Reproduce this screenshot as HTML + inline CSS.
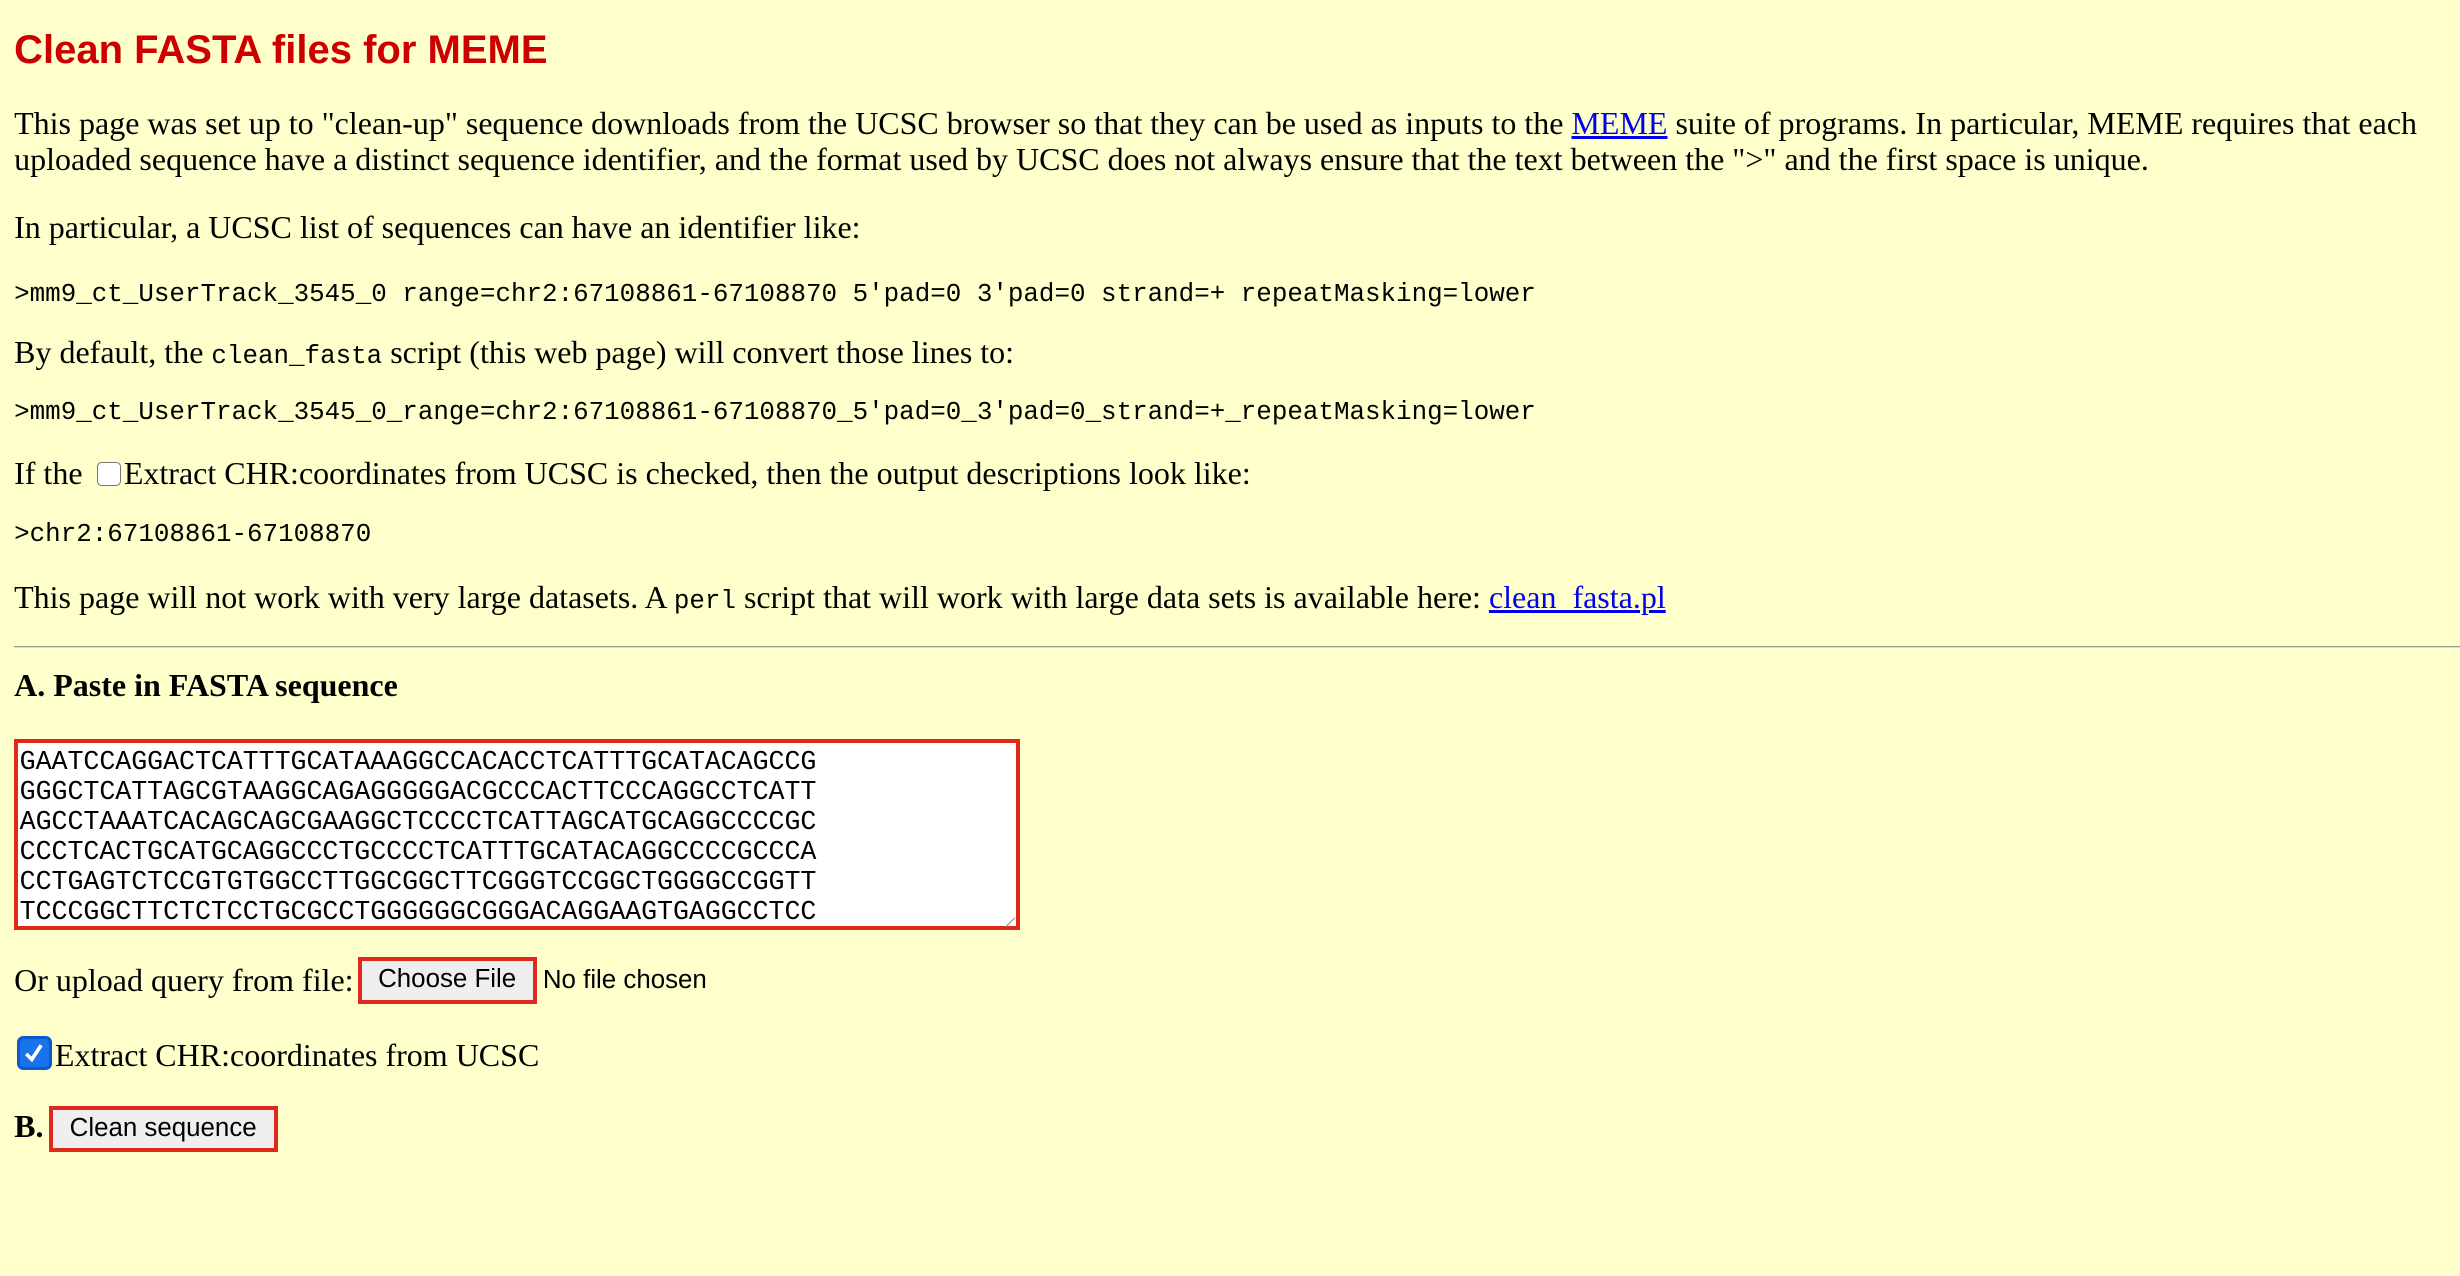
<!DOCTYPE html>
<html><head><meta charset="utf-8"><style>
html,body{margin:0;padding:0;background:#ffffcc;}
body{width:2460px;height:1276px;overflow:hidden;}
#w{zoom:1.569;position:relative;width:1568px;height:813px;font-family:"Liberation Serif",serif;font-size:20.4px;color:#000;}
.a{position:absolute;left:9px;white-space:nowrap;line-height:23px;}
h1{position:absolute;left:9px;top:18px;margin:0;font:bold 25.5px "Liberation Sans",sans-serif;color:#cc0000;}
.m{font-family:"Liberation Mono",monospace;font-size:16.5px;}
.c{font-family:"Liberation Mono",monospace;font-size:16.5px;}
a{color:#0000ee;}
.btn{position:absolute;border:3px solid #e0281c;background:#efefef;font:16.5px "Liberation Sans",sans-serif;box-sizing:border-box;text-align:center;}
</style></head><body><div id="w">
<h1>Clean FASTA files for MEME</h1>
<div class="a" style="top:67px">This page was set up to "clean-up" sequence downloads from the UCSC browser so that they can be used as inputs to the <a href="#">MEME</a> suite of programs. In particular, MEME requires that each</div>
<div class="a" style="top:90px">uploaded sequence have a distinct sequence identifier, and the format used by UCSC does not always ensure that the text between the "&gt;" and the first space is unique.</div>
<div class="a" style="top:133px">In particular, a UCSC list of sequences can have an identifier like:</div>
<div class="a m" style="top:176px">&gt;mm9_ct_UserTrack_3545_0 range=chr2:67108861-67108870 5'pad=0 3'pad=0 strand=+ repeatMasking=lower</div>
<div class="a" style="top:213px">By default, the <span class="c">clean_fasta</span> script (this web page) will convert those lines to:</div>
<div class="a m" style="top:251px">&gt;mm9_ct_UserTrack_3545_0_range=chr2:67108861-67108870_5'pad=0_3'pad=0_strand=+_repeatMasking=lower</div>
<div class="a" style="top:290px">If the <span style="display:inline-block;width:14px;height:14px;border:1px solid #777;border-radius:3px;background:#fff;vertical-align:-1px;margin:0 2px 0 4px"></span>Extract CHR:coordinates from UCSC is checked, then the output descriptions look like:</div>
<div class="a m" style="top:329px">&gt;chr2:67108861-67108870</div>
<div class="a" style="top:369px">This page will not work with very large datasets. A <span class="c">perl</span> script that will work with large data sets is available here: <a href="#">clean_fasta.pl</a></div>
<div style="position:absolute;left:9px;right:0;top:412px;height:0;border-top:1px solid #999;border-bottom:1px solid #ddd"></div>
<div class="a" style="top:425px;font-weight:bold">A. Paste in FASTA sequence</div>
<div style="position:absolute;left:9px;top:471px;width:641px;height:122px;border:3px solid #e0281c;box-sizing:border-box;background:#fff;">
<div style="position:absolute;left:1px;top:3px;font:17px 'Liberation Mono',monospace;line-height:19.2px;white-space:pre;letter-spacing:-0.04px">GAATCCAGGACTCATTTGCATAAAGGCCACACCTCATTTGCATACAGCCG
GGGCTCATTAGCGTAAGGCAGAGGGGGACGCCCACTTCCCAGGCCTCATT
AGCCTAAATCACAGCAGCGAAGGCTCCCCTCATTAGCATGCAGGCCCCGC
CCCTCACTGCATGCAGGCCCTGCCCCTCATTTGCATACAGGCCCCGCCCA
CCTGAGTCTCCGTGTGGCCTTGGCGGCTTCGGGTCCGGCTGGGGCCGGTT
TCCCGGCTTCTCTCCTGCGCCTGGGGGGCGGGACAGGAAGTGAGGCCTCC</div>
<div style="position:absolute;right:2px;bottom:2px;width:8px;height:8px;border-right:1px solid #888;transform:rotate(45deg);"></div>
</div>
<div class="a" style="top:613px">Or upload query from file:</div>
<div class="btn" style="left:228px;top:610px;width:114px;height:30px;line-height:24px">Choose File</div>
<div class="a" style="left:346px;top:613px;font:16.5px 'Liberation Sans',sans-serif;line-height:23px">No file chosen</div>
<div style="position:absolute;left:11px;top:660px;width:22px;height:22px;background:#1a73e8;border-radius:4px;box-sizing:border-box;border:2px solid #0b5ad0"><svg width="18" height="18" viewBox="0 0 18 18" style="position:absolute;left:0;top:0"><path d="M4 9.5 L7.5 13 L13.5 4" stroke="#fff" stroke-width="2.3" fill="none"/></svg></div>
<div class="a" style="left:35px;top:661px">Extract CHR:coordinates from UCSC</div>
<div class="a" style="top:706px;font-weight:bold">B.</div>
<div class="btn" style="left:31px;top:705px;width:146px;height:29px;line-height:23px">Clean sequence</div>
</div></body></html>
